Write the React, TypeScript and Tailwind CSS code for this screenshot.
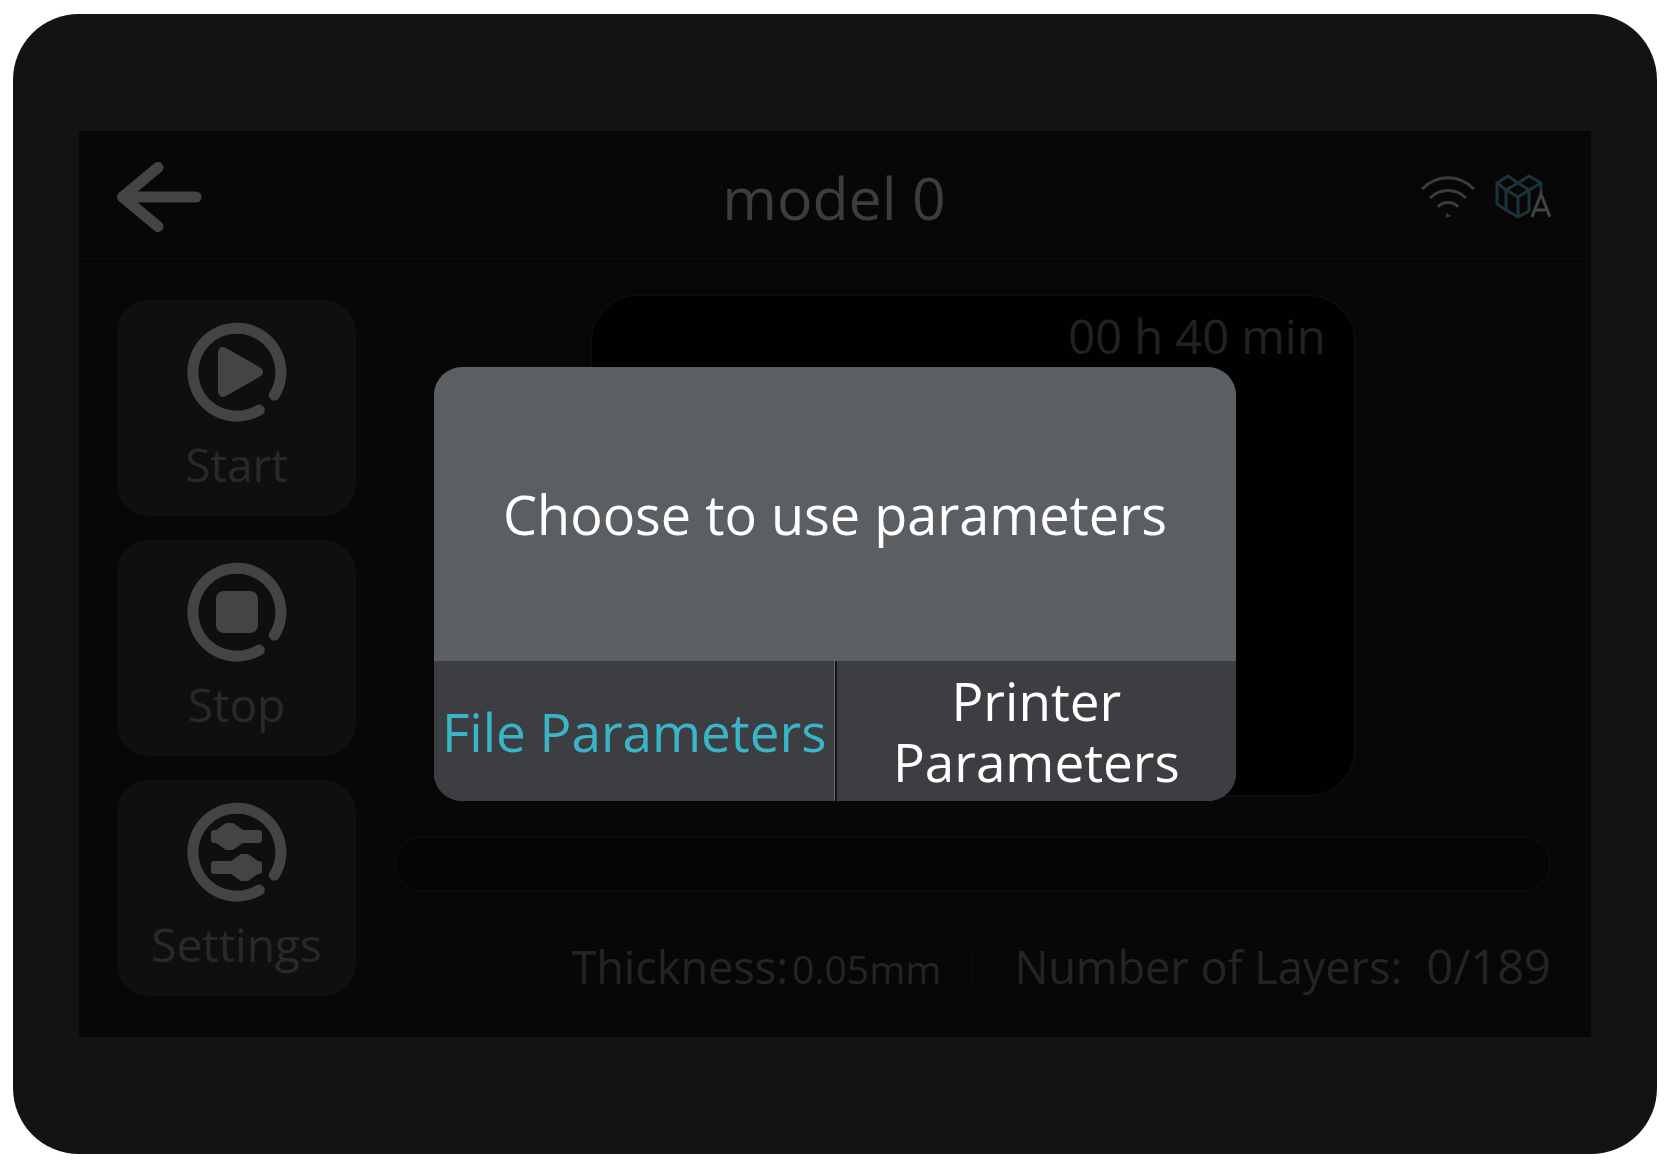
import type { ReactNode } from "react";

interface SideAction {
  id: string;
  label: string;
  icon: ReactNode;
}

function RingIcon({ children }: { children: ReactNode }) {
  return (
    <svg
      viewBox="0 0 100 100"
      className="h-[100px] w-[100px] text-[#424445]"
      fill="currentColor"
      aria-hidden="true"
    >
      <path
        d="M87.4 73.2A44 44 0 1 0 72.2 88.1"
        fill="none"
        stroke="currentColor"
        strokeWidth="11"
        strokeLinecap="round"
      />
      {children}
    </svg>
  );
}

const sideActions: SideAction[] = [
  {
    id: "start",
    label: "Start",
    icon: (
      <RingIcon>
        <path
          d="M36 30v40l35-20z"
          stroke="currentColor"
          strokeWidth="10"
          strokeLinejoin="round"
        />
      </RingIcon>
    ),
  },
  {
    id: "stop",
    label: "Stop",
    icon: (
      <RingIcon>
        <rect x="29" y="29" width="42" height="42" rx="8" />
      </RingIcon>
    ),
  },
  {
    id: "settings",
    label: "Settings",
    icon: (
      <RingIcon>
        <rect x="24" y="28" width="51" height="13" rx="3" />
        <rect x="24" y="59" width="51" height="13" rx="3" />
        <path d="M39 21h7l10 7v13l-10 7h-7l-10-7V28z" />
        <path d="M54 52h7l10 7v13l-10 7h-7l-10-7V59z" />
      </RingIcon>
    ),
  },
];

function BackArrow() {
  return (
    <svg viewBox="0 0 86 70" className="h-[70px] w-[86px]" fill="none" aria-hidden="true">
      <path
        d="M41 5.500 5.500 35 41 64.500M10 35h69"
        stroke="#434444"
        strokeWidth="11"
        strokeLinecap="round"
        strokeLinejoin="round"
      />
      <path d="M5.500 35 18 25v20z" fill="#434444" />
    </svg>
  );
}

function WifiIcon() {
  return (
    <svg viewBox="0 0 54 44" className="h-11 w-[54px]" fill="none" aria-hidden="true">
      <g stroke="#3a3b3b" strokeWidth="3">
        <path d="M1 14C16-1 38-1 53 14" />
        <path d="M9 23c10-10 26-10 36 0" />
        <path d="M17 32c5-6 15-6 20 0" />
      </g>
      <path d="M25 38v5l5-2z" fill="#3a3b3b" />
    </svg>
  );
}

function CubesIcon() {
  return (
    <svg viewBox="0 0 56 46" className="h-[46px] w-14" fill="none" aria-hidden="true">
      <g stroke="#17353a" strokeWidth="3" strokeLinejoin="round">
        <path d="m11 16-9-7 11-7 10 7M23 9l11-7 12 7-12 7" />
        <path d="m11 16 12-7 11 7-11 7z" />
        <path d="M2 9v21l9 6 12 7 11-6V16M11 16v20M23 23v20M46 9v10" />
      </g>
      <path d="m37 43 9-23 9 23M40 36h12" stroke="#424343" strokeWidth="3" />
    </svg>
  );
}

export default function App() {
  return (
    <div className="min-h-screen bg-white pt-[14px] pr-[15px] pb-[7px] pl-[13px] font-['Open_Sans','Noto_Sans',sans-serif]">
      <div className="rounded-[66px] bg-[#111314] px-[66px] py-[117px]">
        <div className="relative bg-[#080607]">
          <header className="grid h-[129px] grid-cols-[1fr_auto_1fr] items-center border-b-2 border-[#0c0a0b] pt-1 pr-10 pl-[38px]">
            <button type="button" aria-label="Back" className="justify-self-start">
              <BackArrow />
            </button>
            <h1 className="text-[59px] leading-[80px] text-[#3d3d3d]">model 0</h1>
            <div className="flex items-center gap-5 justify-self-end">
              <WifiIcon />
              <CubesIcon />
            </div>
          </header>

          <main className="flex gap-[38px] pt-[34px] pr-10 pb-9 pl-[38px]">
            <nav className="mt-[6px] flex w-[239px] shrink-0 flex-col gap-6">
              {sideActions.map((action) => (
                <button
                  key={action.id}
                  type="button"
                  className="flex h-[216px] flex-col items-center rounded-[32px] bg-[#0e0f10] pt-[22px] text-[46px] leading-[64px] text-[#29292a]"
                >
                  {action.icon}
                  <span className="mt-[10px]">{action.label}</span>
                </button>
              ))}
            </nav>

            <section className="min-w-0 flex-1">
              <div className="mx-auto h-[503px] max-w-[766px] rounded-[48px] border-2 border-[#0b0c0c] bg-[#010101] px-7 pt-2 text-right">
                <span className="text-[47px] leading-[64px] text-[#222222]">00 h 40 min</span>
              </div>

              <div
                role="progressbar"
                aria-label="Print progress"
                aria-valuenow={0}
                aria-valuemin={0}
                aria-valuemax={189}
                className="mt-[39px] h-14 rounded-full border-2 border-[#0b0c0c] bg-[#050505]"
              />

              <div className="mt-[42px] flex items-baseline justify-end text-[45px] leading-[64px] whitespace-nowrap text-[#242424]">
                <span>Thickness:</span>
                <span className="ml-1 text-[39px]">0.05mm</span>
                <span className="mr-[42px] ml-[30px] h-11 w-px self-center bg-[#0e0d0e]" />
                <span className="mr-6">Number of Layers:</span>
                <span className="text-[47px]">0/189</span>
              </div>
            </section>
          </main>

          <div className="absolute inset-0 flex items-center justify-center">
            <div
              role="dialog"
              aria-modal="true"
              aria-labelledby="dialog-title"
              className="w-[53%] overflow-hidden rounded-[28px] bg-[#5c5f62]"
            >
              <h2
                id="dialog-title"
                className="flex h-[294px] items-center justify-center text-[54px] leading-[60px] text-white"
              >
                Choose to use parameters
              </h2>
              <div className="grid h-[140px] grid-cols-2 bg-[#3d3e41] text-[53px] leading-[61px]">
                <button
                  type="button"
                  className="border-r border-[#66686a] whitespace-nowrap text-[#3ab4c9]"
                >
                  File Parameters
                </button>
                <button type="button" className="border-l-2 border-[#161718] px-8 text-white">
                  Printer Parameters
                </button>
              </div>
            </div>
          </div>
        </div>
      </div>
    </div>
  );
}
